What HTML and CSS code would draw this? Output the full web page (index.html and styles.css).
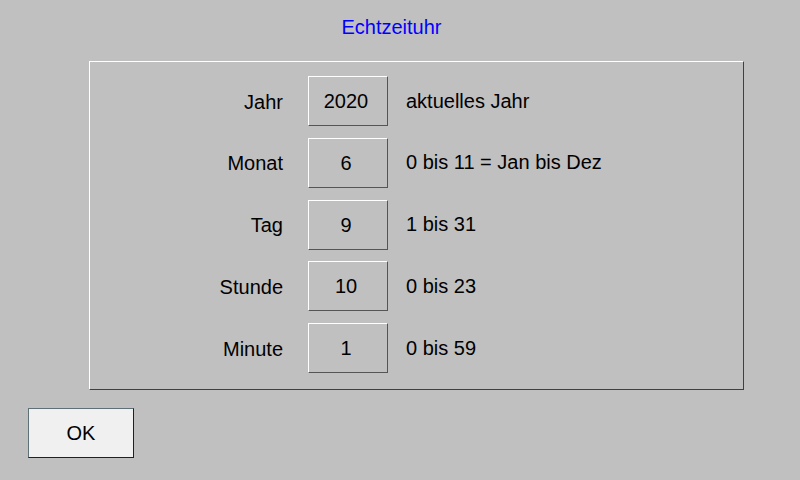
FILE: index.html
```html
<!DOCTYPE html>
<html lang="de">
<head>
<meta charset="UTF-8" />
<title>Echtzeituhr</title>
<link rel="stylesheet" href="styles.css">
</head>
<body>

<div class="title">Echtzeituhr</div>

<div class="panel">
  <div class="rows">
    <div class="label">Jahr</div>
    <div class="value">2020</div>
    <div class="hint">aktuelles Jahr</div>

    <div class="label">Monat</div>
    <div class="value">6</div>
    <div class="hint">0 bis 11 = Jan bis Dez</div>

    <div class="label">Tag</div>
    <div class="value">9</div>
    <div class="hint">1 bis 31</div>

    <div class="label">Stunde</div>
    <div class="value">10</div>
    <div class="hint">0 bis 23</div>

    <div class="label">Minute</div>
    <div class="value">1</div>
    <div class="hint">0 bis 59</div>
  </div>
</div>

<button type="button" class="ok">OK</button>

</body>
</html>
```

FILE: styles.css
```css
body {
  margin: 0;
  background-color: #c0c0c0;
  font-family: "Liberation Sans", Arial, sans-serif;
  font-size: 20px;
  color: #000;
  width: 800px;
  height: 480px;
  overflow: hidden;
}

.title {
  height: 54px;
  line-height: 54px;
  text-align: center;
  padding-right: 17px;
  color: #0000ff;
  font-size: 20px;
}

.panel {
  margin: 7px 0 0 89px;
  width: 653px;
  height: 327px;
  border-top: 1px solid #fff;
  border-left: 1px solid #fff;
  border-right: 1px solid #404040;
  border-bottom: 1px solid #404040;
}

.rows {
  display: grid;
  grid-template-columns: 194px 80px 1fr;
  grid-auto-rows: 50px;
  row-gap: 11.75px;
  column-gap: 24px;
  padding-top: 14px;
  align-items: center;
}

.label {
  text-align: right;
  padding-top: 2px;
  margin-right: 1px;
}

.value {
  box-sizing: border-box;
  height: 50px;
  line-height: 49px;
  padding-right: 4px;
  text-align: center;
  border-top: 1px solid #fff;
  border-left: 1px solid #fff;
  border-right: 1px solid #555;
  border-bottom: 1px solid #555;
}

.hint {
  margin-left: -6px;
}

.ok {
  display: block;
  margin: 18px 0 0 28px;
  width: 106px;
  height: 50px;
  padding: 0;
  background-color: #f0f0f0;
  border-top: 1px solid #5f7077;
  border-left: 1px solid #5f7077;
  border-right: 1px solid #202020;
  border-bottom: 1px solid #202020;
  border-radius: 0;
  font-family: "Liberation Sans", Arial, sans-serif;
  font-size: 20px;
  color: #000;
}
```
